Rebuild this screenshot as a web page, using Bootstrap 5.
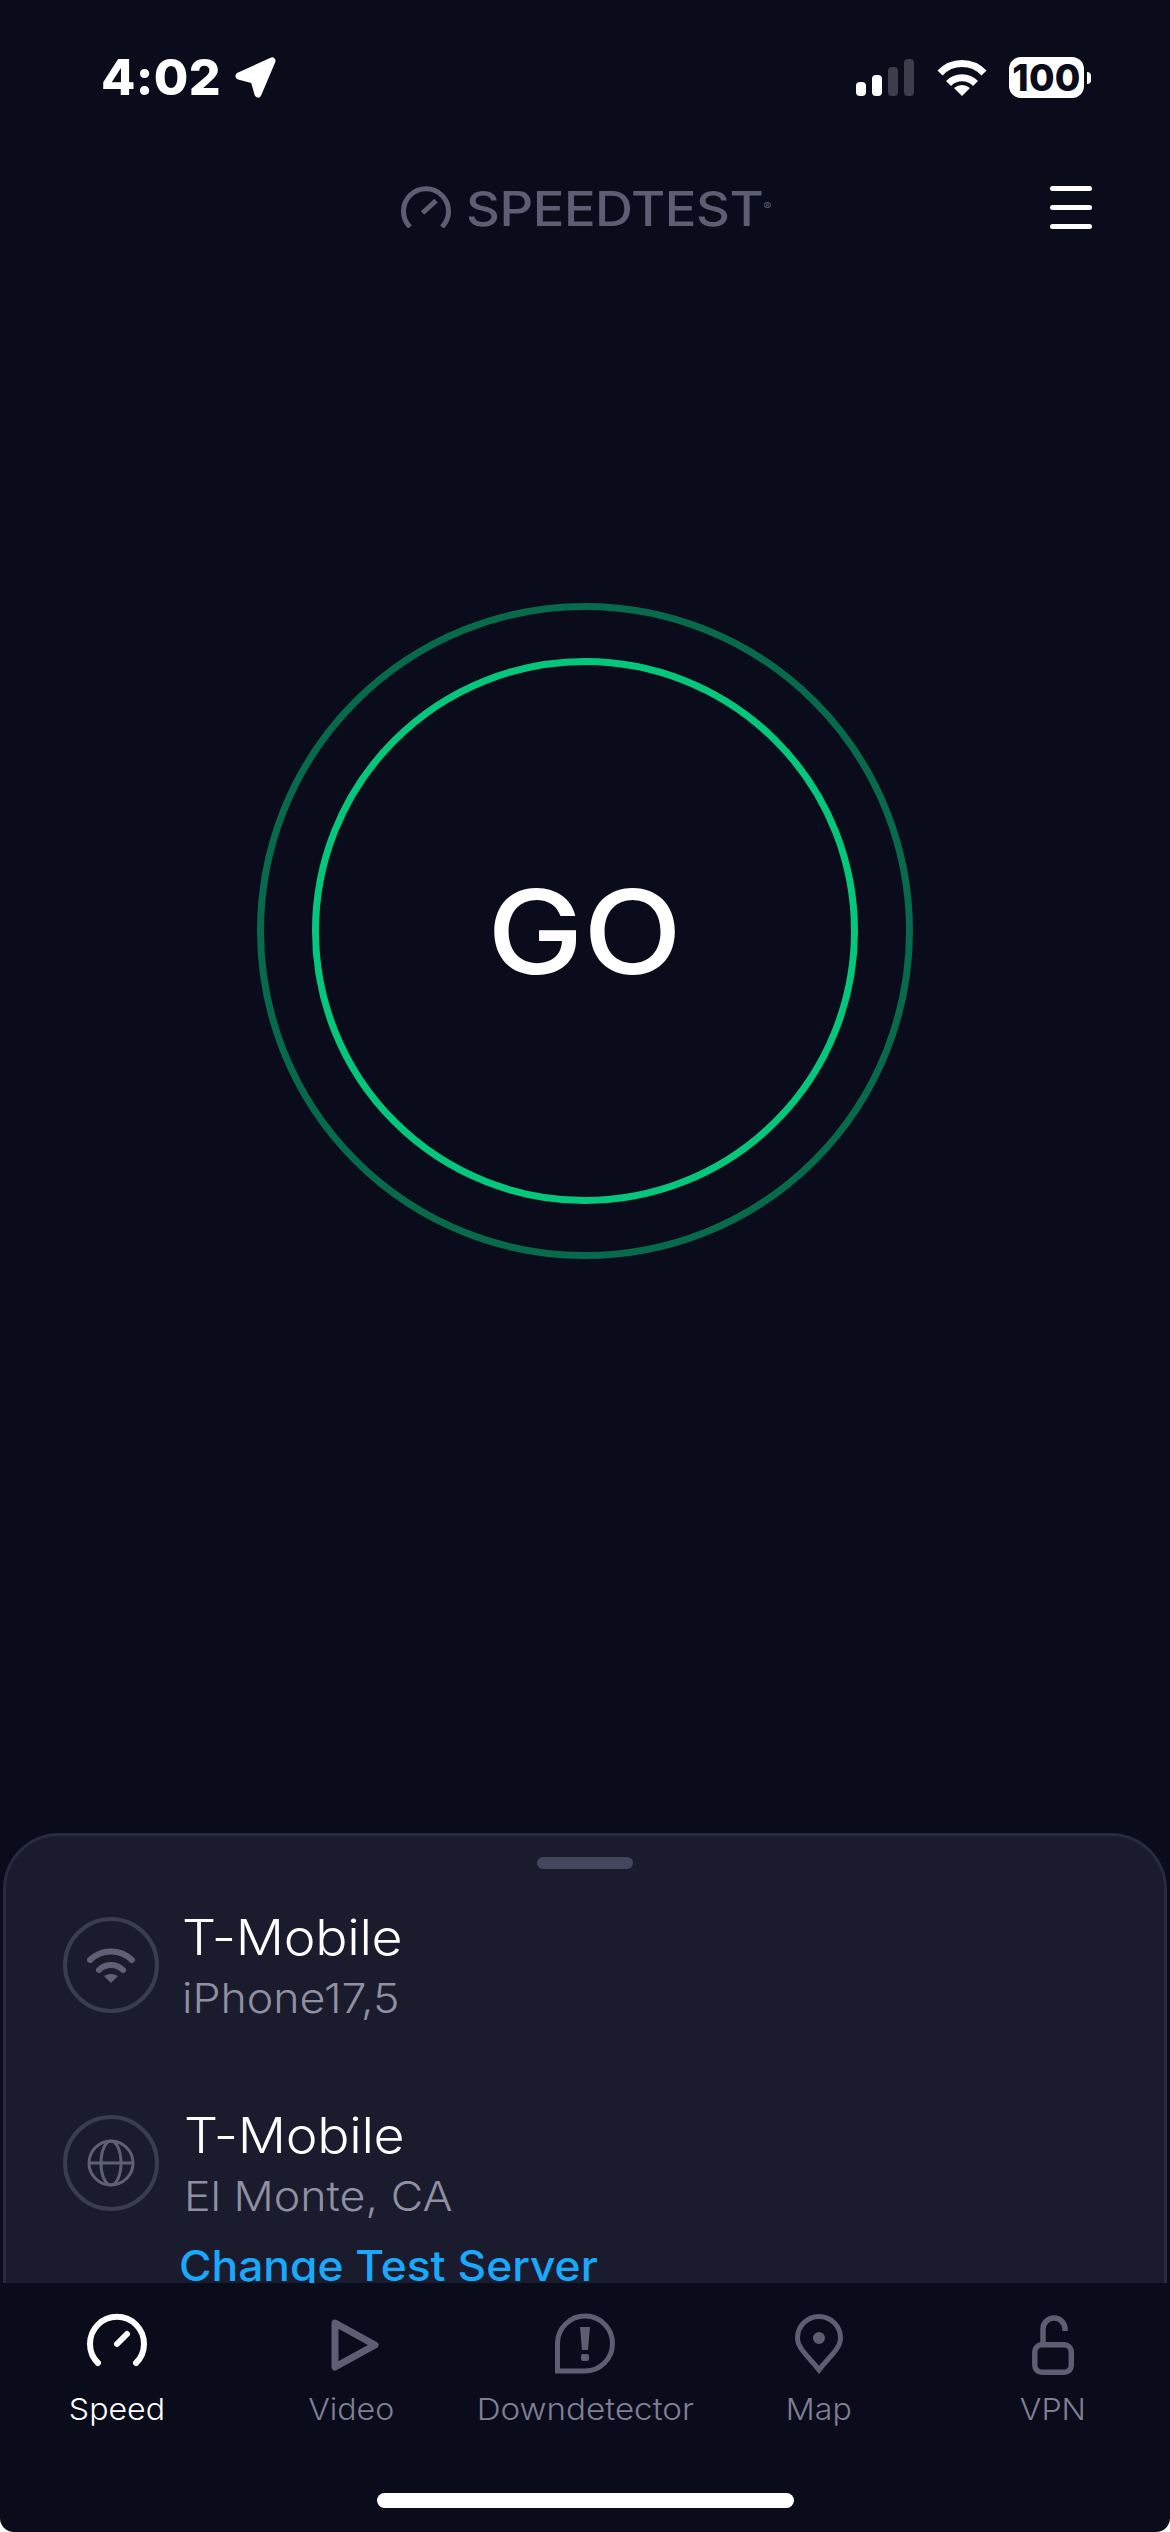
<!DOCTYPE html>
<html lang="en"><head><meta charset="utf-8"><title>Speedtest</title>
<link href="https://cdn.jsdelivr.net/npm/bootstrap@5.3.0/dist/css/bootstrap.min.css" rel="stylesheet">
<style>
html,body{margin:0;background:#fff;}
body{font-family:Inter,"Noto Sans",sans-serif;}
.app-shell{width:1170px;height:2532px;background:#0a0c1b;overflow:hidden;border-radius:0 0 14px 14px;color:#fff;}
.status-row{height:130px;padding:57px 79px 0 101px;}
.clock{font-size:50px;line-height:50px;font-weight:800;margin-top:-5px;letter-spacing:.4px;margin-right:14px;}
.sig-bars{gap:6px;height:37px;margin-top:2px;margin-right:23px;}
.sig-bars span{width:10px;border-radius:4px;background:#fff;}
.sig-bars .off{background:#3d3e4c;}
.h14{height:14px}.h21{height:21px}.h29{height:29px}.h37{height:37px}
.wifi-svg{margin-top:2px;margin-right:22px;}
.batt-body{width:75px;height:41px;background:#fff;border-radius:12px;color:#0a0c1b;font-size:37px;font-weight:800;line-height:41px;letter-spacing:.3px;}
.batt-tip{width:4px;height:12px;background:#fff;border-radius:0 6px 6px 0;margin-left:3px;margin-top:15px;}
.top-row{height:130px;padding:56px 78px 0 401px;}
.brand-word{font-size:47.5px;line-height:42px;font-weight:500;color:#5d5e72;margin-left:15px;letter-spacing:-.4px;margin-top:2px;transform:scaleX(1.105);transform-origin:left center;}
.brand-word sup{font-size:11px;top:-16px;margin-left:0;vertical-align:baseline;position:relative;font-weight:400;letter-spacing:0;}
.burger{width:42px;gap:14px;}
.burger span{height:5px;background:#fff;border-radius:3px;}
.stage{padding-top:343px;}
.ring-outer{width:656px;height:656px;border:7px solid #066a4b;border-radius:50%;}
.ring-inner{width:546px;height:546px;border:7px solid #05c77c;border-radius:50%;}
.go-word{font-size:117px;line-height:1;font-weight:500;letter-spacing:0;transform:scaleX(1.1);}
.sheet{height:450px;margin:0 3px;background:#1a1c2e;border:3px solid #282a3e;border-bottom:0;border-radius:56px 56px 0 0;overflow:hidden;}
.grip{width:96px;height:12px;background:#44465e;border-radius:6px;margin:21px auto 0;}
.sheet-rows{padding:48px 0 0 57px;}
.sheet-row{height:198px;}
.net-disc{width:96px;height:96px;border:4px solid #3a3c50;border-radius:50%;}
.net-text{margin-left:23px;margin-top:-7px;}
.net-text.shift{margin-left:25px;}
.net-title,.net-sub,.change-link{transform-origin:left center;white-space:nowrap;}
.net-title{font-size:49px;line-height:56px;font-weight:300;letter-spacing:-.3px;transform:scaleX(1.095);}
.net-sub{font-size:41px;line-height:50px;font-weight:300;color:#8f90a0;margin-top:7px;transform:scaleX(1.09);}
.change-link{font-size:42px;line-height:48px;font-weight:500;color:#1aa8fb;margin-left:-5px;margin-top:21px;transform:scaleX(1.055);}
.tabbar{padding:29px 0 24px;}
.tab-item{width:234px;color:#7f8094;font-size:30px;line-height:36px;font-weight:300;}
.tab-item span{transform:scaleX(1.07);}
.tab-item.wide-label span{transform:scaleX(1.105);}
.tab-item.on{color:#fff;}
.tab-item svg{margin-bottom:15px;}
.home-bar{width:417px;height:15px;background:#fff;border-radius:8px;margin:66px auto 0;}
</style></head>
<body>
<div class="app-shell d-flex flex-column">
  <div class="status-row d-flex align-items-start flex-shrink-0">
    <div class="clock">4:02</div>
    <svg width="42" height="41" viewBox="233 58 42 41" fill="#fff" stroke="#fff" stroke-width="7" stroke-linejoin="round"><path d="M237 77 270 62 256 95 252 81Z"/></svg>
    <div class="sig-bars d-flex align-items-end ms-auto"><span class="h14"></span><span class="h21"></span><span class="h29 off"></span><span class="h37 off"></span></div>
    <svg class="wifi-svg" width="50" height="37" viewBox="0 0 50 37" fill="none" stroke="#fff" stroke-width="7"><path d="M3 14A30 30 0 0 1 47 14"/><path d="M11.5 24.5A19 19 0 0 1 38.5 24.5"/><path d="M25 37 17 29Q25 23 33 29Z" fill="#fff" stroke="none"/></svg>
    <div class="batt-body text-center">100</div>
    <div class="batt-tip"></div>
  </div>
  <div class="top-row d-flex align-items-start justify-content-between flex-shrink-0">
    <div class="d-flex align-items-start">
      <svg width="50" height="42" viewBox="401 186 50 42" fill="none" stroke="#5d5e72" stroke-width="5"><path d="M410 227A22.5 22.5 0 1 1 442 227"/><path d="M422.6 213 436 200.7"/></svg>
      <div class="brand-word">SPEEDTEST<sup>®</sup></div>
    </div>
    <div class="burger d-flex flex-column"><span></span><span></span><span></span></div>
  </div>
  <div class="stage flex-grow-1 d-flex justify-content-center align-items-start">
    <div class="ring-outer d-flex align-items-center justify-content-center">
      <div class="ring-inner d-flex align-items-center justify-content-center"><span class="go-word">GO</span></div>
    </div>
  </div>
  <div class="sheet flex-shrink-0">
    <div class="grip"></div>
    <div class="sheet-rows">
      <div class="sheet-row d-flex align-items-start">
        <div class="net-disc d-flex align-items-center justify-content-center flex-shrink-0">
          <svg width="48" height="36" viewBox="0 0 48 36" fill="none" stroke="#5f6075" stroke-width="6" stroke-linecap="round"><path d="M3 13A30 30 0 0 1 45 13"/><path d="M12 23A17 17 0 0 1 36 23"/><path d="M24 36 17 29Q24 25 31 29Z" fill="#5f6075" stroke="none"/></svg>
        </div>
        <div class="net-text"><div class="net-title">T-Mobile</div><div class="net-sub">iPhone17,5</div></div>
      </div>
      <div class="sheet-row d-flex align-items-start">
        <div class="net-disc d-flex align-items-center justify-content-center flex-shrink-0">
          <svg width="48" height="48" viewBox="0 0 48 48" fill="none" stroke="#5f6075" stroke-width="3"><circle cx="24" cy="24" r="22"/><ellipse cx="24" cy="24" rx="10" ry="22"/><path d="M2 24H46"/></svg>
        </div>
        <div class="net-text shift"><div class="net-title">T-Mobile</div><div class="net-sub">El Monte, CA</div><div class="change-link">Change Test Server</div></div>
      </div>
    </div>
  </div>
  <div class="tabbar flex-shrink-0">
    <div class="d-flex">
      <div class="tab-item on d-flex flex-column align-items-center">
        <svg width="80" height="64" viewBox="77 2312 80 64" fill="none" stroke="#fff" stroke-width="6" stroke-linecap="round"><path d="M98 2363A27 27 0 1 1 136 2363"/><path d="M117 2344 127 2334"/></svg><span>Speed</span></div>
      <div class="tab-item d-flex flex-column align-items-center">
        <svg width="80" height="64" viewBox="311 2312 80 64" fill="none" stroke="#5d5e72" stroke-width="7" stroke-linejoin="round"><path d="M335 2323 375 2345 335 2367Z"/></svg><span>Video</span></div>
      <div class="tab-item wide-label d-flex flex-column align-items-center">
        <svg width="80" height="64" viewBox="545 2312 80 64" fill="none" stroke="#5d5e72" stroke-width="5"><path d="M557.5 2371V2343A27.5 27.5 0 1 1 585 2371Z"/><path d="M580 2327H590L588 2350H582Z" fill="#5d5e72" stroke="none"/><rect x="581" y="2354" width="8" height="7" rx="2" fill="#5d5e72" stroke="none"/></svg><span>Downdetector</span></div>
      <div class="tab-item d-flex flex-column align-items-center">
        <svg width="80" height="64" viewBox="779 2312 80 64" fill="none" stroke="#5d5e72" stroke-width="5"><path d="M819 2370C810 2358 797.5 2349 797.5 2338A21.5 21.5 0 0 1 840.5 2338C840.5 2349 828 2358 819 2370Z"/><circle cx="819" cy="2338" r="6" fill="#5d5e72" stroke="none"/></svg><span>Map</span></div>
      <div class="tab-item d-flex flex-column align-items-center">
        <svg width="80" height="64" viewBox="1013 2312 80 64" fill="none" stroke="#5d5e72" stroke-width="5.5"><rect x="1034.8" y="2344.8" width="36.5" height="27.5" rx="7"/><path d="M1043 2344V2329A11 11 0 0 1 1065 2329V2331"/></svg><span>VPN</span></div>
    </div>
    <div class="home-bar"></div>
  </div>
</div>
</body></html>
